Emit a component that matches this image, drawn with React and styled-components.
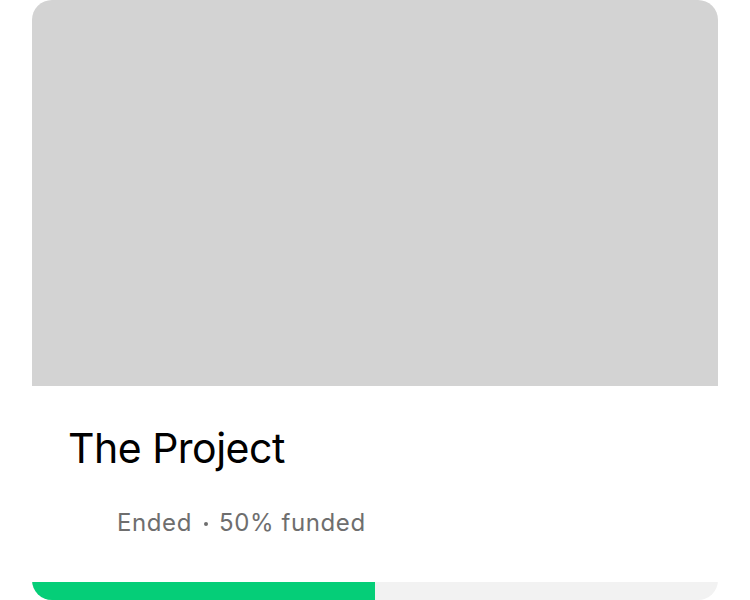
import React from "react";
import styled, { createGlobalStyle } from "styled-components";

const Global = createGlobalStyle`
  html, body { margin: 0; padding: 0; background: #ffffff; }
  body { font-family: Inter, "Noto Sans", sans-serif; }
`;

const Page = styled.div`
  padding: 0 32px;
`;

const Card = styled.article`
  display: flex;
  flex-direction: column;
  height: 600px;
  border-radius: 20px;
  overflow: hidden;
  background: #ffffff;
`;

const Cover = styled.div`
  height: 386px;
  flex: none;
  background: #d3d3d3;
`;

const Body = styled.div`
  flex: 1;
  display: flex;
  flex-direction: column;
  padding: 38px 36px 0;
`;

const Title = styled.h2`
  margin: 0;
  font-size: 41px;
  line-height: 48px;
  font-weight: 400;
  letter-spacing: -0.5px;
  color: #000000;
`;

const Meta = styled.p`
  display: flex;
  align-items: center;
  margin: 36px 0 0 49px;
  font-size: 24px;
  line-height: 29px;
  letter-spacing: 0.6px;
  color: #6e6e6e;
`;

const Dot = styled.span`
  width: 4px;
  height: 4px;
  border-radius: 50%;
  background: #6e6e6e;
  margin: 3px 11px 0 12px;
`;

const Track = styled.div`
  height: 18px;
  flex: none;
  background: #f2f2f2;
`;

const Fill = styled.div`
  height: 100%;
  background: #05ce78;
`;

export default function App() {
  const funded = 50;
  return (
    <>
      <Global />
      <Page>
        <Card>
          <Cover />
          <Body>
            <Title>The Project</Title>
            <Meta>
              <span>Ended</span>
              <Dot />
              <span>{funded}% funded</span>
            </Meta>
          </Body>
          <Track>
            <Fill style={{ width: `${funded}%` }} />
          </Track>
        </Card>
      </Page>
    </>
  );
}
